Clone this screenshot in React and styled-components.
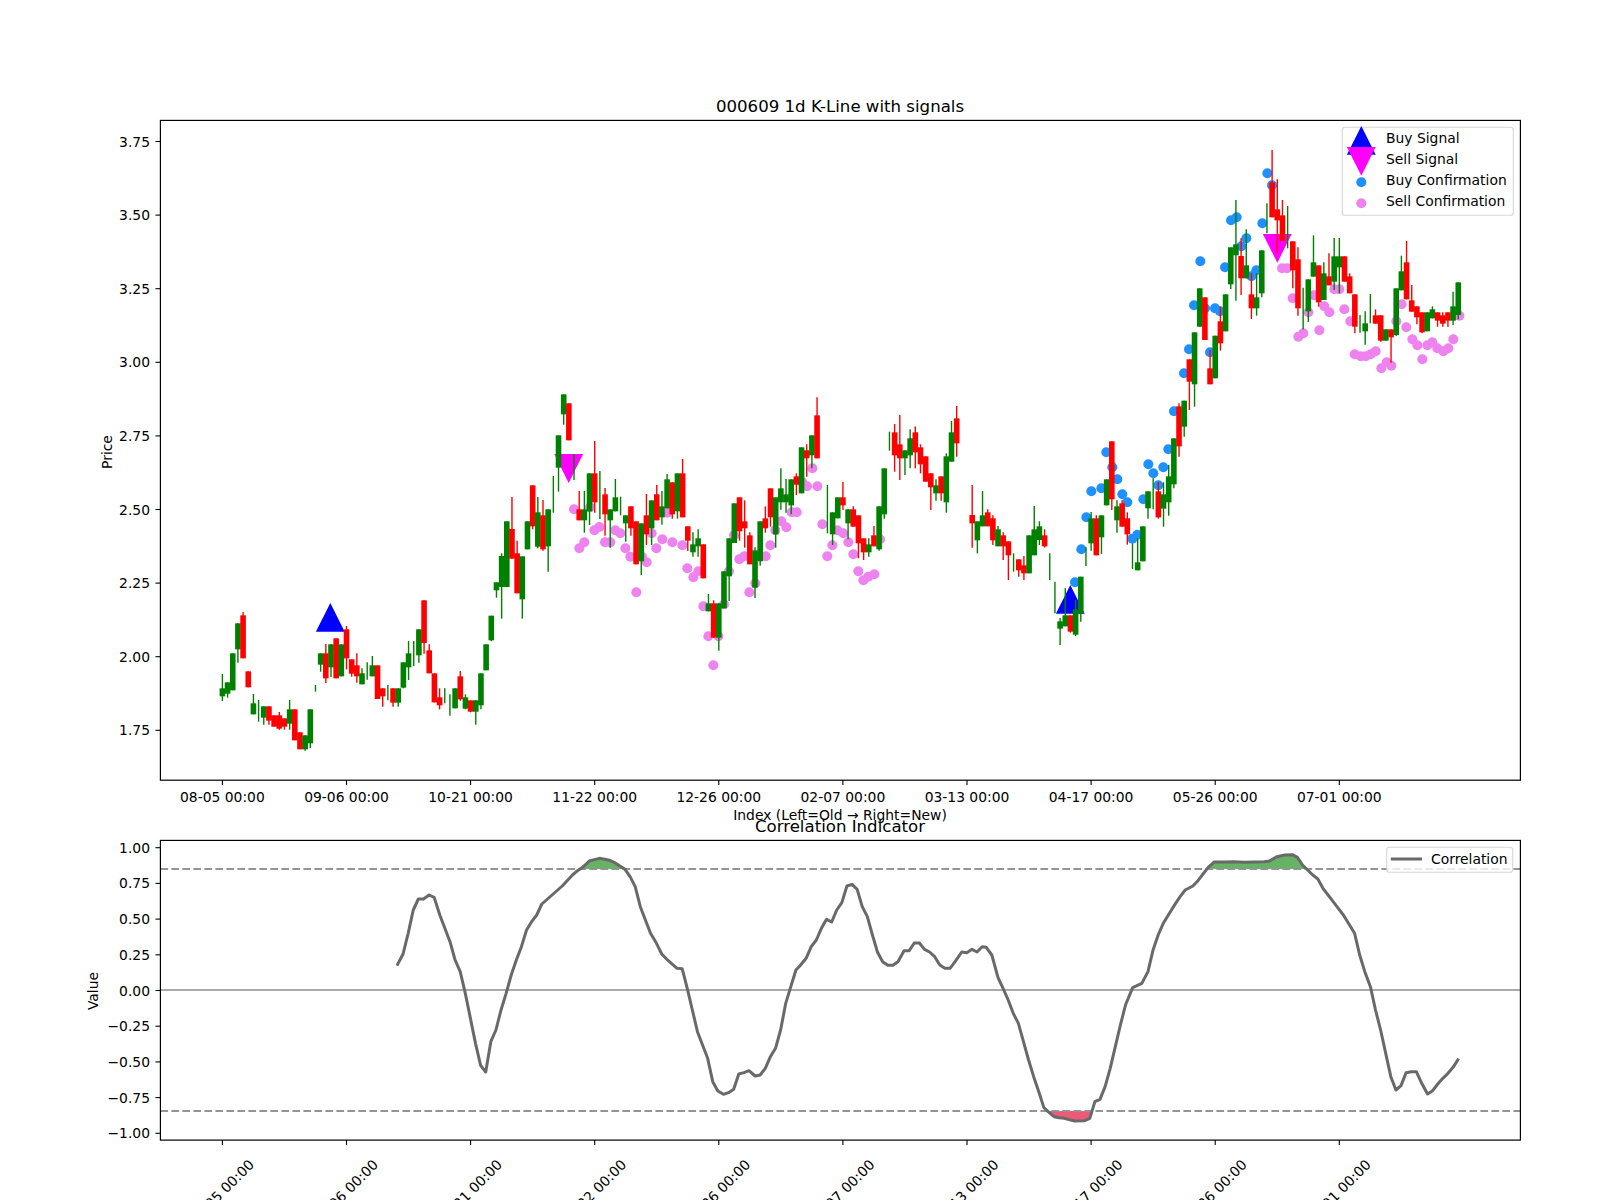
import React from 'react';
import styled, { createGlobalStyle } from 'styled-components';

const GlobalStyle = createGlobalStyle`
  html, body {
    margin: 0;
    padding: 0;
    background: #ffffff;
  }
`;

const Figure = styled.div`
  width: 1600px;
  height: 1200px;
  display: flex;
  flex-direction: column;
  background: #ffffff;
  overflow: hidden;
`;

const ChartCanvas = styled.svg`
  display: block;
  flex: none;
  overflow: visible;
`;

const PlotText = styled.text`
  font-family: 'DejaVu Sans', sans-serif;
  font-size: ${({ $size }) => $size || 13.89}px;
  fill: #000000;
  dominant-baseline: central;
  text-anchor: ${({ $anchor }) => $anchor || 'middle'};
`;

const AxesFrame = styled.rect`
  fill: none;
  stroke: #000000;
  stroke-width: 1.2;
`;

const Tick = styled.line`
  stroke: #000000;
  stroke-width: 1.1;
`;

const Wick = styled.line`
  stroke: ${({ $color }) => $color};
  stroke-width: 1.4;
`;

const Body = styled.rect`
  fill: ${({ $color }) => $color};
`;

const Dot = styled.circle`
  fill: ${({ $color }) => $color};
`;

const Marker = styled.polygon`
  fill: ${({ $color }) => $color};
`;

const LegendFrame = styled.rect`
  fill: #ffffff;
  fill-opacity: 0.8;
  stroke: #cccccc;
  stroke-opacity: 0.8;
  stroke-width: 1.1;
`;

const RefLine = styled.line`
  stroke: ${({ $color }) => $color};
  stroke-width: 2.2;
  stroke-dasharray: ${({ $dashed }) => ($dashed ? '7.7 3.3' : 'none')};
`;

const CorrelationPath = styled.polyline`
  fill: none;
  stroke: #696969;
  stroke-width: 3;
  stroke-linejoin: round;
`;

const Band = styled.polygon`
  fill: ${({ $color }) => $color};
`;

const GREEN = '#008000';
const RED = '#ff0000';
const BUY_DOT = '#1e90ff';
const SELL_DOT = '#ee82ee';

const LEFT = 160.4;
const RIGHT = 1520.4;
const barX = (i) => 222.4 + 5.171 * i;

// rows read off 3x crops: [index, color, bodyTop, bodyBottom, wickTop, wickBottom]
const fromCrop = (originY, rows) =>
  rows.map(([i, c, t, b, wt, wb]) => {
    const y = (v) => (v == null ? null : originY + v / 3);
    return {
      i,
      color: c === 'g' ? GREEN : RED,
      top: y(t),
      bottom: y(b),
      wickTop: y(wt ?? t),
      wickBottom: y(wb ?? b),
    };
  });

const candles = [
  ...fromCrop(420, [
    [0, 'g', 805, 829, 762, 843], [1, 'g', 787, 821, 787, 833], [2, 'g', 700, 811],
    [3, 'g', 610, 688, 610, 728], [4, 'r', 586, 715, 576, 715], [5, 'r', 754, 802],
    [6, 'g', 850, 883, 822, 883], [7, 'g', null, null, 840, 905], [8, 'g', 859, 893, 859, 914],
    [9, 'r', 859, 902, 859, 914], [10, 'r', 886, 920], [11, 'r', 886, 926, 876, 929],
    [12, 'r', 895, 920, 895, 929], [13, 'g', 868, 911, 840, 929], [14, 'r', 868, 961],
    [15, 'r', 937, 988], [16, 'g', 946, 988, 946, 992], [17, 'g', 868, 970, 868, 984],
    [18, 'g', null, null, 795, 815], [19, 'g', 700, 734, 700, 755], [20, 'r', 700, 775, 672, 789],
    [21, 'g', 673, 742, 673, 771], [22, 'r', 655, 775], [23, 'g', 673, 769],
    [24, 'r', 628, 715, 618, 748], [25, 'r', 718, 761, 718, 770], [26, 'r', 736, 769, 700, 788],
    [27, 'g', 760, 793, 745, 793], [28, 'g', null, null, 727, 779], [29, 'g', 736, 769, 708, 769],
    [30, 'r', 736, 837], [31, 'r', 805, 829, 805, 860], [32, 'g', null, null, 795, 841],
    [33, 'r', 805, 848, 805, 860], [34, 'g', 805, 848, 805, 860], [35, 'g', 727, 803, 727, 805],
    [36, 'g', 700, 742, 663, 780], [37, 'g', null, null, 663, 738], [38, 'g', 628, 706, 628, 728],
    [39, 'r', 541, 669, 541, 701], [40, 'r', 691, 760, 673, 760], [41, 'r', 760, 847],
    [42, 'r', 832, 856, 805, 868], [43, 'g', null, null, 805, 850], [44, 'g', null, null, 823, 887],
    [45, 'g', 805, 865], [46, 'r', 769, 838, 753, 842], [47, 'g', 832, 866, 823, 868],
    [48, 'r', 841, 875, 841, 877], [49, 'g', 841, 875, 841, 914], [50, 'g', 760, 856, 760, 868],
    [51, 'g', 673, 751], [52, 'g', 587, 661, 587, 664], [53, 'g', 487, 511, 487, 533],
    [54, 'g', 408, 501, 400, 596], [55, 'g', 304, 501], [56, 'r', 327, 416, 231, 416],
    [57, 'r', 400, 520, 362, 520], [58, 'g', 409, 538, 409, 596], [59, 'g', 304, 388],
    [60, 'r', 196, 319, 196, 328], [61, 'g', 277, 380, 231, 385], [62, 'r', 286, 388, 240, 392],
    [63, 'g', 268, 379, 268, 455],
  ]),
  ...fromCrop(380, [
    [64, 'g', null, null, 288, 398], [65, 'g', 166, 263, 166, 335], [66, 'g', 43, 103, 43, 134],
    [67, 'r', 70, 181], [68, 'g', null, null, 222, 300], [69, 'r', 388, 421, 333, 421],
    [70, 'g', 388, 421, 333, 458], [71, 'g', 280, 394, 280, 435], [72, 'r', 280, 367, 183, 398],
    [73, 'g', null, null, 273, 417], [74, 'r', 343, 403, 324, 467], [75, 'g', 388, 421, 388, 503],
    [76, 'g', 352, 394, 297, 394], [77, 'g', null, null, 350, 406], [78, 'g', 406, 430, 406, 485],
    [79, 'r', 379, 445, 379, 467], [80, 'r', 424, 553], [81, 'g', 430, 544, 430, 585],
    [82, 'r', 406, 463, 342, 495], [83, 'g', 361, 445, 361, 495], [84, 'r', 343, 421, 315, 421],
    [85, 'g', 379, 412, 333, 434], [86, 'g', 298, 385, 282, 385], [87, 'r', 307, 403, 307, 416],
    [88, 'g', 280, 394, 280, 416], [89, 'r', 280, 412, 237, 412], [90, 'r', 439, 482, 439, 513],
    [91, 'g', 493, 517, 457, 530], [92, 'g', 475, 499, 448, 530], [93, 'r', 493, 595],
    [94, 'g', 670, 694, 642, 694], [95, 'r', 670, 773, 661, 773], [96, 'g', 670, 773, 670, 812],
    [97, 'g', 574, 685], [98, 'g', 475, 589, 475, 663], [99, 'g', 370, 489],
    [100, 'r', 352, 454, 352, 482], [101, 'r', 424, 445, 361, 503], [102, 'r', 466, 553, 457, 553],
    [103, 'g', 511, 623, 502, 654], [104, 'g', 424, 544, 424, 557], [105, 'r', 415, 445, 379, 458],
    [106, 'r', 325, 412, 325, 440], [107, 'g', 352, 463, 352, 503], [108, 'g', 325, 367, 265, 389],
    [109, 'g', 343, 367, 297, 398], [110, 'g', 298, 376, 298, 403], [111, 'r', 289, 314, 280, 345],
    [112, 'g', 202, 340], [113, 'r', 211, 235, 193, 290], [114, 'g', 166, 226, 166, 265],
    [115, 'r', 106, 235, 52, 235], [117, 'g', null, null, 315, 460], [118, 'g', 397, 463, 397, 495],
    [119, 'g', 352, 415], [120, 'r', 352, 376, 306, 390], [121, 'g', 388, 430, 388, 478],
    [122, 'r', 388, 440, 379, 440], [123, 'r', 406, 490, 406, 535], [124, 'r', 475, 517, 475, 540],
    [125, 'g', 493, 517, 475, 530], [126, 'r', 466, 499, 438, 499], [127, 'g', 379, 508, 379, 512],
    [128, 'g', 265, 403, 265, 416], [129, 'g', null, null, 155, 212], [130, 'r', 157, 226, 132, 275],
    [131, 'r', 193, 235, 105, 300], [132, 'g', 211, 235, 211, 285], [133, 'g', 175, 226, 148, 265],
    [134, 'r', 157, 217, 139, 265], [135, 'r', 202, 253, 193, 280], [136, 'r', 229, 305],
    [137, 'r', 280, 322, 280, 390], [138, 'g', 316, 340, 298, 362], [139, 'r', 289, 340, 289, 362],
    [140, 'g', 229, 367, 220, 398], [141, 'g', 157, 245, 123, 245], [142, 'r', 115, 190, 78, 230],
    [145, 'r', 405, 430, 315, 503], [146, 'g', 424, 481, 424, 520], [147, 'g', 406, 439, 333, 439],
    [148, 'r', 397, 439, 388, 439], [149, 'r', 415, 481, 406, 495], [150, 'g', 448, 499, 438, 499],
    [151, 'r', 466, 499, 457, 540], [152, 'r', 484, 526, 484, 600], [153, 'g', null, null, 520, 575],
    [154, 'r', 538, 571, 538, 590], [155, 'r', 556, 580, 528, 600], [156, 'g', 466, 580],
    [157, 'g', 448, 526, 378, 526], [158, 'g', 439, 480, 424, 495], [159, 'r', 466, 499, 448, 503],
    [160, 'g', null, null, 520, 600], [161, 'g', null, null, 605, 700], [162, 'g', 724, 746, 714, 795],
    [163, 'g', 706, 739, 625, 739], [164, 'r', 706, 755, 706, 758], [165, 'g', 688, 764, 660, 768],
    [166, 'g', 590, 700, 590, 725], [167, 'g', null, null, 502, 558], [168, 'g', 415, 490, 396, 512],
    [169, 'r', 415, 526, 406, 526], [170, 'g', 406, 472, 406, 522], [171, 'g', 298, 376],
    [172, 'r', 184, 358, 184, 390], [173, 'g', 379, 421, 361, 458], [174, 'r', 370, 440, 361, 440],
    [175, 'r', 415, 463, 397, 494], [176, 'g', null, null, 490, 567], [177, 'g', 547, 571, 475, 571],
    [178, 'g', 439, 544], [179, 'g', 334, 385, 334, 416], [180, 'g', null, null, 295, 388],
    [181, 'r', 334, 412, 306, 416], [182, 'g', 343, 386, 307, 440], [183, 'g', 289, 367, 255, 407],
    [184, 'g', 175, 313, 175, 325], [185, 'r', 79, 199, 70, 230],
  ]),
  ...fromCrop(110, [
    [186, 'g', 872, 950, 872, 980], [187, 'r', 748, 815, 748, 900], [188, 'g', 667, 823, 667, 890],
    [189, 'g', 535, 650], [190, 'r', 562, 690], [191, 'r', 775, 823, 720, 823], [192, 'g', 677, 805],
    [193, 'r', 634, 700, 590, 722], [194, 'g', 553, 664], [195, 'g', 412, 523, 412, 537],
    [196, 'g', 403, 436, 270, 572], [197, 'r', 438, 505, 385, 555], [198, 'g', 466, 505, 358, 505],
    [199, 'r', 553, 595, 490, 627], [200, 'g', 562, 595, 490, 617], [201, 'g', 421, 550, 421, 562],
    [202, 'g', null, null, 280, 370], [203, 'r', 217, 322, 120, 322], [204, 'r', 298, 331, 208, 430],
    [205, 'r', 316, 393, 270, 393], [206, 'g', null, null, 288, 415], [207, 'r', 394, 481, 394, 535],
    [208, 'r', 448, 595, 412, 617], [209, 'g', null, null, 533, 658], [210, 'g', 508, 604, 508, 636],
    [211, 'g', 457, 500, 376, 500], [212, 'r', 466, 577, 466, 590], [213, 'g', 490, 570, 457, 570],
    [214, 'r', 499, 526, 430, 526], [215, 'g', 439, 515, 384, 540], [216, 'g', 439, 472, 384, 550],
    [217, 'r', 439, 515], [218, 'r', 499, 550, 490, 550], [219, 'r', 553, 650, 553, 670],
    [220, 'g', null, null, 615, 668], [221, 'g', 640, 664, 604, 704], [222, 'g', null, null, 552, 640],
    [223, 'r', 616, 641, 598, 641], [224, 'r', 616, 692, 616, 695], [225, 'g', 658, 692],
    [226, 'r', 658, 682, 658, 758], [227, 'g', 535, 675, 535, 678], [228, 'g', 484, 541, 437, 541],
    [229, 'r', 457, 568, 393, 568], [230, 'r', 571, 605, 525, 605], [231, 'r', 589, 622, 589, 643],
    [232, 'r', 607, 667, 607, 670], [233, 'g', 607, 664], [234, 'g', 598, 625, 589, 625],
    [235, 'r', 607, 632, 607, 650], [236, 'r', 616, 641, 607, 650], [237, 'r', 607, 632, 607, 650],
    [238, 'g', 589, 632, 545, 645], [239, 'g', 517, 615, 517, 628],
  ]),
];

const cropDots = (originX, originY, pairs) =>
  pairs.map(([x, y]) => ({ x: originX + x / 3, y: originY + y / 3 }));

const sellDots = [
  ...cropDots(550, 380, [
    [72, 388], [88, 505], [103, 487], [120, 382], [133, 451], [148, 441], [165, 487], [181, 487],
    [196, 451], [211, 460], [226, 505], [241, 530], [259, 637], [276, 530], [290, 547], [305, 460],
    [319, 505], [337, 478], [352, 398], [367, 487], [397, 496], [412, 565], [430, 592], [445, 574],
    [460, 679], [475, 769], [490, 856], [505, 769], [522, 673], [537, 574], [552, 466], [568, 538],
    [583, 529], [598, 637], [616, 610], [631, 529], [647, 529], [661, 496], [676, 451], [694, 424],
    [709, 442], [725, 397], [740, 397], [757, 307], [771, 319], [787, 265], [802, 319], [817, 433],
    [832, 529], [847, 496], [862, 451], [880, 460], [895, 487], [910, 523], [925, 574], [940, 601],
    [955, 590], [973, 583], [990, 478],
  ]),
  ...cropDots(1170, 110, [
    [336, 475], [351, 475], [368, 565], [385, 680], [400, 670], [415, 607], [432, 556], [448, 661],
    [463, 589], [478, 607], [493, 538], [508, 538], [523, 598], [541, 634], [554, 733], [572, 739],
    [587, 739], [602, 733], [617, 724], [634, 775], [650, 757], [664, 767], [679, 634], [695, 583],
    [709, 652], [727, 688], [742, 706], [757, 748], [772, 706], [787, 697], [802, 715], [820, 724],
    [835, 715], [850, 688], [868, 617],
  ]),
];

const buyDots = [
  ...cropDots(950, 380, [
    [375, 607], [394, 508], [409, 412], [424, 334], [454, 325], [469, 217], [487, 262], [502, 298],
    [517, 343], [532, 367], [547, 476], [562, 464], [580, 358], [595, 253], [610, 280], [625, 316],
    [640, 262], [655, 208], [672, 94],
  ]),
  ...cropDots(1170, 110, [
    [42, 790], [57, 718], [72, 586], [91, 454], [105, 595], [120, 727], [135, 595],
    [150, 604], [165, 472], [183, 331], [200, 322], [214, 409], [229, 385], [244, 499], [259, 481],
    [277, 340], [292, 190], [306, 226],
  ]),
];

const upTriangle = (x, apex, base) => `${x},${apex} ${x - 14.4},${base} ${x + 14.4},${base}`;
const downTriangle = (x, base, apex) => `${x - 14.4},${base} ${x + 14.4},${base} ${x},${apex}`;

const xTickLabels = [
  '08-05 00:00', '09-06 00:00', '10-21 00:00', '11-22 00:00', '12-26 00:00',
  '02-07 00:00', '03-13 00:00', '04-17 00:00', '05-26 00:00', '07-01 00:00',
];
const xTicks = xTickLabels.map((label, n) => ({ label, x: 222.4 + 124.1 * n }));

const priceTicks = ['3.75', '3.50', '3.25', '3.00', '2.75', '2.50', '2.25', '2.00', '1.75'].map(
  (label) => ({ label, y: 141.5 + (3.75 - Number(label)) * 294.4 }),
);

const valueTicks = [1, 0.75, 0.5, 0.25, 0, -0.25, -0.5, -0.75, -1].map((v) => ({
  label: (v < 0 ? '\u2212' : '') + Math.abs(v).toFixed(2),
  y: 990.5 - v * 142.8,
}));

const curveLeft = [
  [778, 557], [790, 522], [800, 460], [810, 390], [820, 357], [830, 357], [841, 345], [851, 352],
  [862, 405], [882, 485], [892, 540], [902, 575], [912, 640], [922, 715], [932, 790], [942, 856],
  [952, 876], [962, 785], [972, 750], [982, 690], [992, 640], [1002, 585], [1012, 540], [1022, 500],
  [1032, 450], [1042, 425], [1052, 405], [1062, 372], [1082, 345], [1102, 318], [1122, 285],
  [1132, 272], [1142, 262], [1155, 243], [1175, 235], [1195, 241], [1205, 248], [1225, 268],
  [1235, 290], [1245, 320], [1255, 380], [1265, 420], [1275, 460], [1285, 485], [1297, 522],
  [1307, 538], [1327, 565], [1337, 566], [1347, 625], [1357, 690], [1367, 755], [1377, 795],
  [1387, 835], [1397, 905], [1407, 933], [1418, 943], [1428, 938], [1438, 928], [1448, 882],
  [1458, 878], [1468, 872], [1480, 888], [1490, 885], [1500, 865], [1510, 830], [1520, 805],
  [1530, 750], [1540, 670], [1550, 620], [1560, 570],
];

const curveRight = [
  [0, 557], [12, 535], [22, 500], [32, 480], [42, 445], [52, 418], [62, 426], [72, 390], [82, 368],
  [92, 318], [102, 313], [112, 328], [122, 380], [132, 410], [142, 465], [152, 517], [162, 545],
  [172, 556], [182, 556], [192, 545], [204, 512], [214, 512], [224, 489], [234, 489], [244, 508],
  [254, 516], [264, 530], [274, 555], [284, 565], [294, 565], [304, 545], [317, 516], [327, 518],
  [337, 508], [347, 516], [357, 500], [365, 502], [376, 525], [388, 592], [398, 625], [408, 660],
  [418, 700], [428, 730], [438, 785], [448, 840], [458, 890], [468, 935], [478, 983], [488, 997],
  [498, 1010], [508, 1013], [518, 1015], [538, 1023], [558, 1022], [568, 1015], [578, 965],
  [588, 958], [598, 920], [608, 865], [618, 800], [628, 735], [638, 675], [652, 623], [670, 610],
  [682, 575], [692, 510], [702, 465], [712, 430], [722, 405], [732, 380], [745, 350], [755, 330],
  [770, 318], [780, 302], [790, 282], [800, 262], [812, 246], [830, 246], [850, 245], [870, 247],
  [890, 246], [910, 245], [920, 243], [935, 230], [950, 225], [965, 224], [975, 232], [985, 255],
  [995, 270], [1005, 285], [1015, 297], [1025, 325], [1035, 345], [1045, 365], [1055, 385],
  [1065, 405], [1075, 430], [1087, 460], [1097, 525], [1107, 575], [1118, 620], [1128, 690],
  [1138, 750], [1148, 820], [1158, 890], [1168, 930], [1178, 917], [1188, 878], [1198, 875],
  [1208, 875], [1218, 908], [1230, 942], [1240, 932], [1250, 912], [1260, 895], [1270, 880],
  [1280, 862], [1291, 836],
];

const curve = [
  ...curveLeft.map(([x, y]) => [x / 1.96, 780 + y / 3]),
  ...curveRight.map(([x, y]) => [800 + x / 1.96, 780 + y / 3]),
];
const curvePoints = curve.map((p) => p.join(',')).join(' ');

const HIGH_LINE = 869;
const LOW_LINE = 1111;
const bandPoints = (level) =>
  `${curvePoints} ${curve[curve.length - 1][0]},${level} ${curve[0][0]},${level}`;

const CandleGlyph = ({ candle }) => {
  const x = barX(candle.i);
  return (
    <g>
      <Wick $color={candle.color} x1={x} x2={x} y1={candle.wickTop} y2={candle.wickBottom} />
      {candle.top != null && (
        <Body
          $color={candle.color}
          x={x - 2.8}
          width={5.6}
          y={candle.top}
          height={candle.bottom - candle.top}
        />
      )}
    </g>
  );
};

const PriceChart = () => (
  <ChartCanvas width="1600" height="822" viewBox="0 0 1600 822">
    <PlotText $size={16.6} x="840" y="106">
      000609 1d K-Line with signals
    </PlotText>

    <Marker $color="#0000ff" points={upTriangle(330.3, 603, 631.7)} />
    <Marker $color="#0000ff" points={upTriangle(1070.3, 585, 613.7)} />
    <Marker $color="#ff00ff" points={downTriangle(568.7, 454, 483)} />
    <Marker $color="#ff00ff" points={downTriangle(1277.3, 234, 262.7)} />
    {buyDots.map((d, n) => (
      <Dot key={n} $color={BUY_DOT} cx={d.x} cy={d.y} r="5" />
    ))}
    {sellDots.map((d, n) => (
      <Dot key={n} $color={SELL_DOT} cx={d.x} cy={d.y} r="5" />
    ))}
    {candles.map((c) => (
      <CandleGlyph key={c.i} candle={c} />
    ))}

    <AxesFrame x={LEFT} y="120.4" width={RIGHT - LEFT} height="659.8" />
    {priceTicks.map((t) => (
      <g key={t.label}>
        <Tick x1={LEFT - 4.9} x2={LEFT} y1={t.y} y2={t.y} />
        <PlotText $anchor="end" x="150" y={t.y}>
          {t.label}
        </PlotText>
      </g>
    ))}
    {xTicks.map((t) => (
      <g key={t.label}>
        <Tick x1={t.x} x2={t.x} y1="780" y2="784.9" />
        <PlotText x={t.x} y="796.5">
          {t.label}
        </PlotText>
      </g>
    ))}
    <PlotText x="840" y="815">
      Index (Left=Old → Right=New)
    </PlotText>
    <PlotText x="107" y="452" transform="rotate(-90 107 452)">
      Price
    </PlotText>

    <LegendFrame x="1342.3" y="127.3" width="171" height="88" rx="2.8" />
    <Marker $color="#0000ff" points={upTriangle(1361.3, 126, 154.7)} />
    <Marker $color="#ff00ff" points={downTriangle(1361.3, 147, 175.7)} />
    <Dot $color={BUY_DOT} cx="1361.3" cy="182.3" r="5" />
    <Dot $color={SELL_DOT} cx="1361.3" cy="203.3" r="5" />
    <PlotText $anchor="start" x="1386" y="138.3">
      Buy Signal
    </PlotText>
    <PlotText $anchor="start" x="1386" y="159.3">
      Sell Signal
    </PlotText>
    <PlotText $anchor="start" x="1386" y="180.3">
      Buy Confirmation
    </PlotText>
    <PlotText $anchor="start" x="1386" y="201.3">
      Sell Confirmation
    </PlotText>
  </ChartCanvas>
);

const CorrelationChart = () => (
  <ChartCanvas width="1600" height="378" viewBox="0 822 1600 378">
    <defs>
      <clipPath id="aboveHigh">
        <rect x={LEFT} y="840" width={RIGHT - LEFT} height={HIGH_LINE - 840} />
      </clipPath>
      <clipPath id="belowLow">
        <rect x={LEFT} y={LOW_LINE} width={RIGHT - LEFT} height={1140 - LOW_LINE} />
      </clipPath>
    </defs>
    <PlotText $size={16.6} x="840" y="826">
      Correlation Indicator
    </PlotText>

    <Band $color="#66b366" points={bandPoints(HIGH_LINE)} clipPath="url(#aboveHigh)" />
    <Band $color="#eb5b78" points={bandPoints(LOW_LINE)} clipPath="url(#belowLow)" />
    <RefLine $color="#aaaaaa" x1={LEFT} x2={RIGHT} y1="990" y2="990" />
    <RefLine $color="#949494" $dashed x1={LEFT} x2={RIGHT} y1={HIGH_LINE} y2={HIGH_LINE} />
    <RefLine $color="#949494" $dashed x1={LEFT} x2={RIGHT} y1={LOW_LINE} y2={LOW_LINE} />
    <CorrelationPath points={curvePoints} />

    <AxesFrame x={LEFT} y="840.4" width={RIGHT - LEFT} height="299.7" />
    {valueTicks.map((t) => (
      <g key={t.label}>
        <Tick x1={LEFT - 4.9} x2={LEFT} y1={t.y} y2={t.y} />
        <PlotText $anchor="end" x="150" y={t.y}>
          {t.label}
        </PlotText>
      </g>
    ))}
    {xTicks.map((t) => (
      <g key={t.label}>
        <Tick x1={t.x} x2={t.x} y1="1140" y2="1144.9" />
        <PlotText x={t.x - 1} y="1192" transform={`rotate(-45 ${t.x - 1} 1192)`}>
          {t.label}
        </PlotText>
      </g>
    ))}
    <PlotText x="93" y="991" transform="rotate(-90 93 991)">
      Value
    </PlotText>

    <LegendFrame x="1386.7" y="847.3" width="126" height="25" rx="2.8" />
    <CorrelationPath points="1390.8,859 1422,859" />
    <PlotText $anchor="start" x="1431" y="859">
      Correlation
    </PlotText>
  </ChartCanvas>
);

const App = () => (
  <Figure>
    <GlobalStyle />
    <PriceChart />
    <CorrelationChart />
  </Figure>
);

export default App;
